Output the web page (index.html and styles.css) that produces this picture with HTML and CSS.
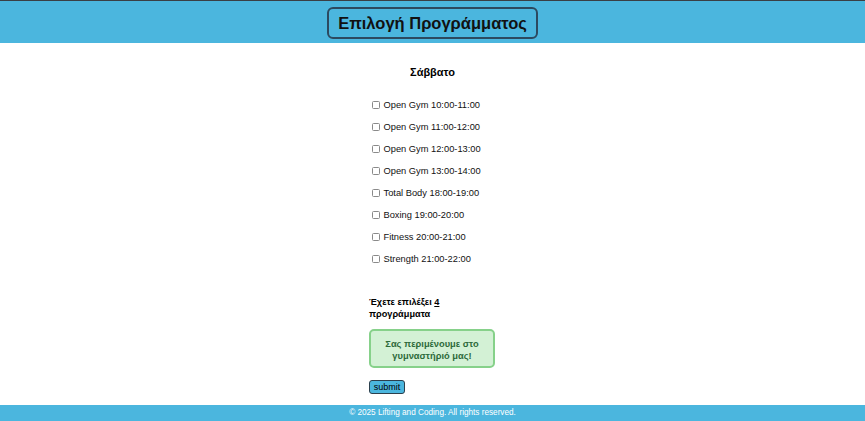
FILE: index.html
```html
<!DOCTYPE html>
<html lang="el">
<head>
<meta charset="utf-8">
<title>Επιλογή Προγράμματος</title>
<link rel="stylesheet" href="styles.css">
</head>
<body>
<header class="site-header">
  <h1 class="title">Επιλογή Προγράμματος</h1>
</header>
<main class="main">
  <form class="schedule">
    <h2 class="day">Σάββατο</h2>
    <ul class="slots">
      <li><label><input type="checkbox"> Open Gym 10:00-11:00</label></li>
      <li><label><input type="checkbox"> Open Gym 11:00-12:00</label></li>
      <li><label><input type="checkbox"> Open Gym 12:00-13:00</label></li>
      <li><label><input type="checkbox"> Open Gym 13:00-14:00</label></li>
      <li><label><input type="checkbox"> Total Body 18:00-19:00</label></li>
      <li><label><input type="checkbox"> Boxing 19:00-20:00</label></li>
      <li><label><input type="checkbox"> Fitness 20:00-21:00</label></li>
      <li><label><input type="checkbox"> Strength 21:00-22:00</label></li>
    </ul>
    <p class="count">Έχετε επιλέξει <u>4</u> προγράμματα</p>
    <div class="message">Σας περιμένουμε στο γυμναστήριό μας!</div>
    <button type="button" class="submit">submit</button>
  </form>
</main>
<footer class="site-footer">© 2025 Lifting and Coding. All rights reserved.</footer>
</body>
</html>
```
FILE: styles.css
```css
html, body {
  margin: 0;
  padding: 0;
}
body {
  font-family: "Liberation Sans", Arial, sans-serif;
  color: #000;
  background: #fff;
  width: 865px;
  height: 421px;
  display: flex;
  flex-direction: column;
  overflow: hidden;
}
.site-header {
  background: #4bb6de;
  border-top: 1px solid #3a3f44;
  height: 42px;
  flex: none;
  display: flex;
  justify-content: center;
  align-items: flex-start;
}
.title {
  margin: 6px 0 0;
  width: 211px;
  height: 32px;
  box-sizing: border-box;
  border: 2px solid #2c4a60;
  border-radius: 6px;
  font-size: 16.5px;
  font-weight: bold;
  line-height: 28px;
  text-align: center;
  color: #111;
}
.main {
  flex: 1;
  display: flex;
  justify-content: center;
}
.schedule {
  width: 127px;
  display: flex;
  flex-direction: column;
  align-items: flex-start;
}
.day {
  align-self: stretch;
  text-align: center;
  margin: 23px 0 0;
  font-size: 11px;
  font-weight: bold;
  line-height: 13px;
}
.slots {
  list-style: none;
  margin: 15px 0 0;
  padding: 0;
  white-space: nowrap;
}
.slots li {
  height: 22px;
  font-size: 9.3px;
  line-height: 22px;
  color: #111;
}
.slots label {
  display: flex;
  align-items: center;
  gap: 4px;
  height: 22px;
}
.slots input {
  appearance: none;
  -webkit-appearance: none;
  margin: 0 0 0 3px;
  width: 7.5px;
  height: 7.5px;
  border: 1px solid #8a8a8a;
  border-radius: 1.5px;
  background: #fff;
  box-sizing: border-box;
}
.count {
  margin: 26px 0 0;
  width: 104px;
  font-size: 9.2px;
  font-weight: bold;
  line-height: 12px;
}
.message {
  margin: 9px 0 0;
  width: 126px;
  height: 39px;
  box-sizing: border-box;
  padding: 7px 4px 3px;
  background: #d3f1d5;
  border: 2px solid #86d18a;
  border-radius: 5px;
  color: #2d6a3a;
  font-size: 9.3px;
  font-weight: bold;
  line-height: 12px;
  text-align: center;
}
.submit {
  margin: 12px 0 0;
  padding: 0 3px;
  width: 36px;
  height: 14px;
  font-family: "Liberation Sans", Arial, sans-serif;
  font-size: 9px;
  line-height: 11px;
  background: #4bb6de;
  border: 1px solid #2c3f4c;
  border-radius: 3px;
  color: #000;
}
.site-footer {
  height: 16px;
  flex: none;
  background: #4bb6de;
  color: #fff;
  font-size: 8.2px;
  line-height: 16px;
  text-align: center;
}
```
